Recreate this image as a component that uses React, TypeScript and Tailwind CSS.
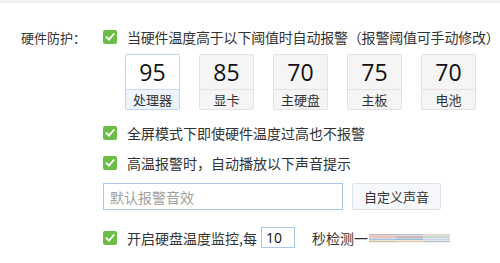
const thresholds = [
  { value: 95, label: '处理器', active: true },
  { value: 85, label: '显卡' },
  { value: 70, label: '主硬盘' },
  { value: 75, label: '主板' },
  { value: 70, label: '电池' },
]

function Check() {
  return (
    <div className="w-[14px] h-[14px] rounded-[2px] bg-[#6cbd45] flex items-center justify-center shrink-0">
      <svg width="10" height="10" viewBox="0 0 10 10" fill="none">
        <path d="M1.5 5.2 L4 7.6 L8.6 2.2" stroke="white" strokeWidth="1.8" strokeLinecap="square" />
      </svg>
    </div>
  )
}

function Stripes() {
  const rows = [
    ['#c9b9b0', '#b8c8dc', '#d8d0c0'],
    ['#e8b8b0', '#c8a8a0', '#b8d0c8'],
    ['#a8c0e0', '#98b8d8', '#c8d8e8'],
    ['#d0c0a0', '#e0c8a8', '#b8c0d0'],
  ]
  return (
    <svg width="82" height="10" viewBox="0 0 82 10" className="ml-[1px] shrink-0">
      {rows.map((r, i) =>
        r.map((c, j) => (
          <rect key={i + '-' + j} x={j * 27} y={1 + i * 2.2} width="27" height="1.6" fill={c} />
        ))
      )}
    </svg>
  )
}

export default function App() {
  return (
    <div className="w-[500px] h-[263px] bg-white overflow-hidden text-[#333] font-['Noto_Sans_CJK_SC','Noto_Sans',sans-serif]">
      <div className="h-[3px] bg-[#f0f0f0]" />
      <div className="flex pt-[24px]">
        <div className="w-[103px] shrink-0 pl-[21px] h-[20px] flex items-center text-[13px] leading-none">硬件防护：</div>

        <div className="flex flex-col shrink-0">
          {/* main switch */}
          <div className="h-[20px] flex items-center gap-[10px]">
            <Check />
            <span className="text-[14px] leading-none tracking-[-0.2px] whitespace-nowrap">
              当硬件温度高于以下阈值时自动报警（报警阈值可手动修改）
            </span>
          </div>

          {/* threshold boxes */}
          <div className="flex gap-[19px] ml-[22px] mt-[7px]">
            {thresholds.map((t) => (
              <div
                key={t.label}
                className={`w-[55px] h-[56px] rounded-[2px] border flex flex-col ${
                  t.active ? 'border-[#bcd4f6] bg-white' : 'border-[#e2e2e2] bg-[#f5f5f5]'
                }`}
              >
                <div className="h-[34px] flex items-center justify-center text-[23px] leading-none text-[#111] font-['Open_Sans',sans-serif]">
                  {t.value}
                </div>
                <div
                  className={`flex-1 border-t flex items-center justify-center text-[13px] leading-none ${
                    t.active ? 'border-[#c9dcf7] bg-[#eef4fd]' : 'border-[#e2e2e2]'
                  }`}
                >
                  {t.label}
                </div>
              </div>
            ))}
          </div>

          <div className="h-[20px] flex items-center gap-[10px] mt-[13px]">
            <Check />
            <span className="text-[14px] leading-none">全屏模式下即使硬件温度过高也不报警</span>
          </div>

          <div className="h-[20px] flex items-center gap-[10px] mt-[10px]">
            <Check />
            <span className="text-[14px] leading-none">高温报警时，自动播放以下声音提示</span>
          </div>

          <div className="flex gap-[9px] mt-[10px]">
            <div className="w-[240px] h-[27px] border border-[#a9c9ec] flex items-center pl-[6px] text-[14px] leading-none text-[#a0a0a0]">
              默认报警音效
            </div>
            <div className="w-[89px] h-[27px] border border-[#dde2ea] bg-[#f6f8fb] rounded-[2px] flex items-center justify-center text-[13px] leading-none text-[#333]">
              自定义声音
            </div>
          </div>

          <div className="h-[21px] flex items-center mt-[17px]">
            <Check />
            <span className="ml-[10px] text-[14px] leading-none whitespace-nowrap">开启硬盘温度监控,每</span>
            <div className="ml-[4px] w-[34px] h-[21px] border border-[#a9c9ec] flex items-center pl-[4px] text-[14px] leading-none text-[#111] font-['Open_Sans',sans-serif]">
              10
            </div>
            <span className="ml-[17px] text-[14px] leading-none whitespace-nowrap">秒检测一</span>
            <Stripes />
          </div>
        </div>
      </div>
    </div>
  )
}
